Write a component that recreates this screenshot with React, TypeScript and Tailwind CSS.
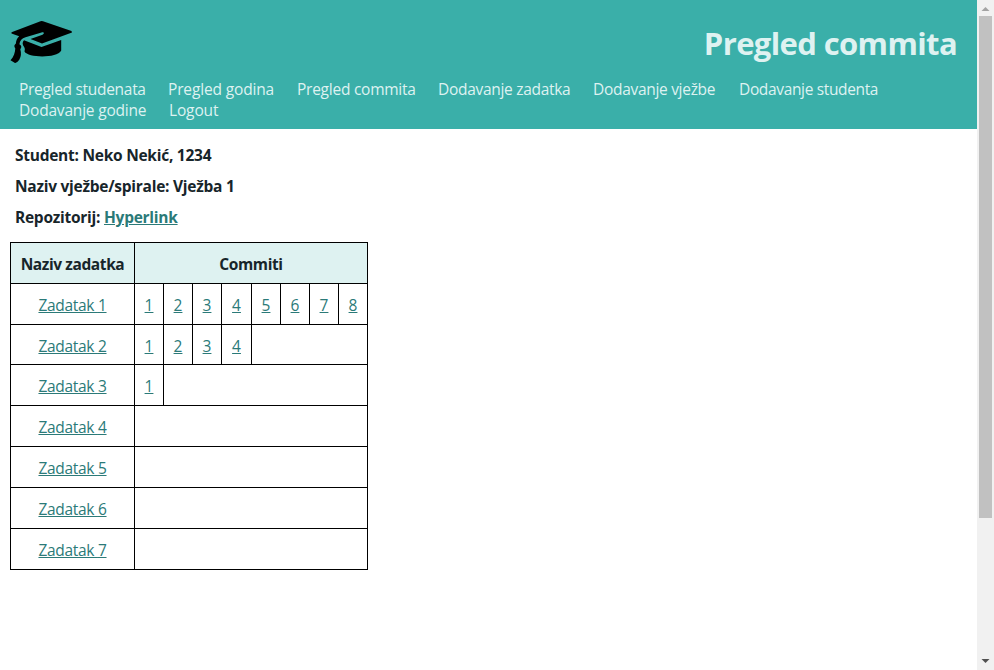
import React from "react";

const nav = [
  { label: "Pregled studenata", box: "w-[149px] tracking-[-0.3px]" },
  { label: "Pregled godina", box: "w-[129px] tracking-[-0.15px]" },
  { label: "Pregled commita", box: "w-[141px] tracking-[-0.25px]" },
  { label: "Dodavanje zadatka", box: "w-[155px] tracking-[-0.3px]" },
  { label: "Dodavanje vježbe", box: "w-[146px] tracking-[-0.3px]" },
  { label: "Dodavanje studenta", box: "w-[150px] tracking-[-0.35px]" },
];

const rows = [
  { count: 8, height: "h-[41px] leading-[42px]" },
  { count: 4, height: "h-10 leading-[42px]" },
  { count: 1, height: "h-[41px] leading-[42px]" },
  { count: 0, height: "h-[41px] leading-[42px]" },
  { count: 0, height: "h-[41px] leading-[42px]" },
  { count: 0, height: "h-[41px] leading-[42px]" },
  { count: 0, height: "h-[41px] leading-[42px]" },
];

function Cap() {
  return (
    <svg viewBox="0 0 64 44" className="h-[44px] w-[64px]" fill="#000">
      <path d="M1.5 12.200 30.500 1.200q1.200-.4 2.500 0L61.500 11 62 12.500 32 23.500 20.500 19 32.500 14.700c2.500-1.200 1.300-3-1-2.200L15.500 17.300Q10 19 9.400 24.200q3.300 1.800.9 5 1.700 5.600-1 10.500-2.500 3.500-4.300 3.200L.5 40.300C4 36.500 5 32.500 5.300 28.400q-2.200-2.600.6-4.900Q6 19 9.200 16.200L1.500 13.500z" />
      <path d="M14 20.300 31.500 27 51.200 20V30.500C47 38.500 18 38 14.500 31.500q1-2.500-.3-4.500-3-3.500-.2-6.700z" />
    </svg>
  );
}

function Scrollbar() {
  return (
    <div className="flex w-[17px] flex-col items-center bg-[#f1f1f1]">
      <svg viewBox="0 0 17 16" className="h-4 w-[17px] shrink-0" fill="#a3a3a3">
        <path d="M4.500 11h8L8.500 7z" />
      </svg>
      <div className="h-[502px] w-[13px] bg-[#c1c1c1]" />
      <div className="grow" />
      <svg viewBox="0 0 17 17" className="h-[17px] w-[17px] shrink-0" fill="#505050">
        <path d="M4.500 6h8l-4 4z" />
      </svg>
    </div>
  );
}

export default function App() {
  return (
    <div className="flex h-[670px] w-[994px] overflow-hidden bg-white font-['Open_Sans','Noto_Sans',sans-serif] text-[15.5px] leading-[21px] text-[#17252a]">
      <div className="w-[977px]">
        <header className="h-[129px] bg-[#3aafa9] text-[#def2f1]">
          <div className="flex h-[79px] justify-between pt-5 pr-5 pl-[10px]">
            <Cap />
            <h1 className="pt-[2px] text-[31px] leading-[43px] font-bold tracking-[-0.62px] whitespace-nowrap">Pregled commita</h1>
          </div>
          <nav className="pl-[19px]">
            <div className="flex">
              {nav.map((n) => (
                <a key={n.label} className={n.box + " whitespace-nowrap"}>{n.label}</a>
              ))}
            </div>
            <div className="flex">
              <a className="w-[150px] tracking-[-0.2px]">Dodavanje godine</a>
              <a className="tracking-[-0.15px]">Logout</a>
            </div>
          </nav>
        </header>
        <section className="flex flex-col gap-[10px] pt-4 pl-[15px] font-bold tracking-[-0.26px]">
          <p>Student: Neko Nekić, 1234</p>
          <p>Naziv vježbe/spirale: Vježba 1</p>
          <p>
            Repozitorij: <a className="text-[#2b7a78] underline">Hyperlink</a>
          </p>
        </section>
        <div className="mt-[14px] ml-[10px] w-[358px] border-t border-l border-black text-center">
          <div className="flex h-[41px] border-b border-black bg-[#def2f1] leading-[42px] font-bold tracking-[-0.4px]">
            <div className="w-[124px] border-r border-black">Naziv zadatka</div>
            <div className="w-[233px] border-r border-black">Commiti</div>
          </div>
          {rows.map(({ count, height }, i) => (
            <div key={i} className={height + " flex border-b border-black text-[#2b7a78]"}>
              <div className="w-[124px] border-r border-black tracking-[-0.3px]">
                <a className="underline">Zadatak {i + 1}</a>
              </div>
              {Array.from({ length: count }, (_, c) => (
                <div key={c} className={(c === 3 ? "w-[30px]" : "w-[29px]") + " border-r border-black"}>
                  <a className="underline">{c + 1}</a>
                </div>
              ))}
              {count < 8 && <div className="grow border-r border-black" />}
            </div>
          ))}
        </div>
      </div>
      <Scrollbar />
    </div>
  );
}
